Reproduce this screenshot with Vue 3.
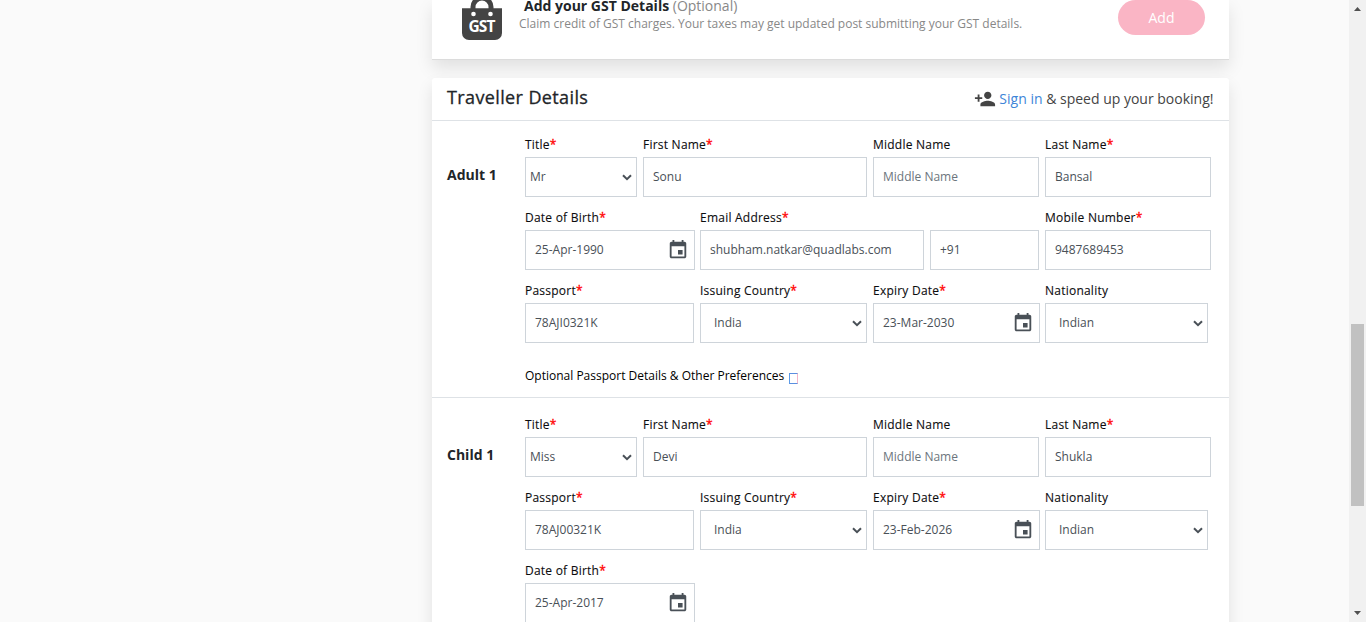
<script setup>
const travellers = [
  {
    name: 'Adult 1',
    optional: true,
    fields: [
      { label: 'Title', required: true, value: 'Mr', type: 'select', size: 'title' },
      { label: 'First Name', required: true, value: 'Sonu', type: 'text', size: 'first' },
      { label: 'Middle Name', value: 'Middle Name', type: 'text', size: 'middle', empty: true },
      { label: 'Last Name', required: true, value: 'Bansal', type: 'text', size: 'last' },
      { label: 'Date of Birth', required: true, value: '25-Apr-1990', type: 'date', size: 'birth' },
      { label: 'Email Address', required: true, value: 'shubham.natkar@quadlabs.com', type: 'text', size: 'email' },
      { label: '', value: '+91', type: 'text', size: 'code' },
      { label: 'Mobile Number', required: true, value: '9487689453', type: 'text', size: 'last' },
      { label: 'Passport', required: true, value: '78AJI0321K', type: 'text', size: 'passport' },
      { label: 'Issuing Country', required: true, value: 'India', type: 'select', size: 'country' },
      { label: 'Expiry Date', required: true, value: '23-Mar-2030', type: 'date', size: 'expiry' },
      { label: 'Nationality', value: 'Indian', type: 'select', size: 'nation' },
    ],
  },
  {
    name: 'Child 1',
    optional: false,
    fields: [
      { label: 'Title', required: true, value: 'Miss', type: 'select', size: 'title' },
      { label: 'First Name', required: true, value: 'Devi', type: 'text', size: 'first' },
      { label: 'Middle Name', value: 'Middle Name', type: 'text', size: 'middle', empty: true },
      { label: 'Last Name', required: true, value: 'Shukla', type: 'text', size: 'last' },
      { label: 'Passport', required: true, value: '78AJ00321K', type: 'text', size: 'passport' },
      { label: 'Issuing Country', required: true, value: 'India', type: 'select', size: 'country' },
      { label: 'Expiry Date', required: true, value: '23-Feb-2026', type: 'date', size: 'expiry' },
      { label: 'Nationality', value: 'Indian', type: 'select', size: 'nation' },
      { label: 'Date of Birth', required: true, value: '25-Apr-2017', type: 'date', size: 'birth' },
    ],
  },
]
</script>

<template>
  <div class="page">
    <main class="content">
      <section class="card gst">
        <svg class="gst-icon" width="40" height="48" viewBox="0 0 40 48">
          <path d="M11 20V15a9 9 0 0 1 18 0v5" fill="none" stroke="#444" stroke-width="5" />
          <path d="M0 16.300H40V41a7 7 0 0 1-7 7H7a7 7 0 0 1-7-7Z" fill="#444" />
          <circle cx="11.500" cy="22" r="2.300" fill="#fff" />
          <circle cx="28.500" cy="22" r="2.300" fill="#fff" />
          <text x="6.500" y="39.700" textLength="27" class="gst-text">GST</text>
        </svg>
        <div class="gst-info">
          <div class="gst-title"><b>Add your GST Details</b> <span>(Optional)</span></div>
          <div class="gst-sub">Claim credit of GST charges. Your taxes may get updated post submitting your GST details.</div>
        </div>
        <button class="add">Add</button>
      </section>

      <section class="card travellers">
        <header class="head">
          <h2>Traveller Details</h2>
          <div class="signin">
            <svg width="22" height="22" viewBox="0 0 24 24" fill="#444">
              <path d="M15 12c2.21 0 4-1.79 4-4s-1.79-4-4-4-4 1.79-4 4 1.79 4 4 4zm-9-2V7H4v3H1v2h3v3h2v-3h3v-2H6zm9 4c-2.67 0-8 1.34-8 4v2h16v-2c0-2.660-5.330-4-8-4z" />
            </svg>
            <span class="signin-text"><a>Sign in</a> &amp; speed up your booking!</span>
          </div>
        </header>

        <div v-for="t in travellers" :key="t.name" class="traveller">
          <div class="who">{{ t.name }}</div>
          <div class="form">
            <div class="grid">
              <div v-for="(f, i) in t.fields" :key="i" class="field" :class="f.size">
                <label>{{ f.label }}<i v-if="f.required">*</i></label>
                <div class="control" :class="[f.type, { empty: f.empty }]">
                  <span class="value">{{ f.value }}</span>
                  <svg v-if="f.type === 'select'" class="chev" width="10" height="7" viewBox="0 0 10 7">
                    <path d="M1 1.200L5 5.200L9 1.200" fill="none" stroke="#495057" stroke-width="2" />
                  </svg>
                  <svg v-if="f.type === 'date'" class="cal" width="22" height="22" viewBox="0 0 24 24" fill="#495057">
                    <path d="M17 12h-5v5h5v-5zM16 1v2H8V1H6v2H5c-1.110 0-1.990.9-1.990 2L3 19c0 1.100.89 2 2 2h14c1.100 0 2-.9 2-2V5c0-1.100-.9-2-2-2h-1V1h-2zm3 18H5V8h14v11z" />
                  </svg>
                </div>
              </div>
            </div>
            <div v-if="t.optional" class="optional">
              <span>Optional Passport Details &amp; Other Preferences</span><i class="toggle"></i>
            </div>
          </div>
        </div>
      </section>
    </main>
    <aside class="scroll">
      <svg width="17" height="17" viewBox="0 0 17 17"><path d="M5 11L8.500 7L12 11Z" fill="#505050" /></svg>
      <div class="track"><div class="thumb"></div></div>
      <svg width="17" height="17" viewBox="0 0 17 17"><path d="M5 6L8.500 10L12 6Z" fill="#505050" /></svg>
    </aside>
  </div>
</template>

<style>
body {
  margin: 0;
  overflow: hidden;
}
</style>

<style scoped>
* {
  box-sizing: border-box;
}
.page {
  display: flex;
  justify-content: flex-end;
  height: 622px;
  overflow: hidden;
  background: #fafafa;
  font-family: "Open Sans", sans-serif;
  color: #212529;
}
.content {
  width: 797px;
  margin-right: 120px;
}
.card {
  background: #fff;
  box-shadow: 0 8px 16px rgba(0, 0, 0, 0.1);
}
.gst {
  display: flex;
  height: 60px;
  padding-left: 30px;
  border-bottom: 1px solid #dcdcdc;
}
.gst-icon {
  margin-top: -8px;
}
.gst-text {
  font: 700 15.5px "Noto Sans", sans-serif;
  fill: #fff;
}
.gst-info {
  width: 599px;
  padding-left: 17px;
  white-space: nowrap;
}
.gst-title {
  height: 16px;
  padding-left: 5px;
  font-size: 14px;
  line-height: 12px;
}
.gst-title b {
  font-weight: 700;
}
.gst-title span {
  color: #888;
}
.gst-sub {
  font-size: 12px;
  line-height: 16px;
  color: #888;
}
.add {
  width: 87px;
  height: 35px;
  padding: 0;
  margin-left: 17px;
  border: 0;
  border-radius: 18px;
  background: #fab5c5;
  color: #fff;
  font: 14px "Open Sans", sans-serif;
}
.travellers {
  margin-top: 18px;
  height: 600px;
  border-radius: 3px 3px 0 0;
}
.head {
  display: flex;
  justify-content: space-between;
  height: 43px;
  padding: 0 15.5px 0 15px;
  border-bottom: 1px solid #dee2e6;
}
h2 {
  margin: 0;
  font-size: 18px;
  font-weight: 400;
  letter-spacing: 0.38px;
  line-height: 39px;
  -webkit-text-stroke: 0.3px #212529;
}
.signin {
  display: flex;
  gap: 3px;
  font-size: 14px;
  line-height: 41px;
  color: #444;
}
.signin svg {
  margin-top: 10px;
}
.signin a {
  color: #3d85d8;
}
.traveller {
  display: flex;
  padding: 13px 18px 0 15px;
}
.traveller + .traveller {
  border-top: 1px solid #dee2e6;
  padding-top: 16px;
}
.who {
  width: 78px;
  padding-top: 31px;
  font-size: 14px;
  font-weight: 700;
  line-height: 20px;
}
.grid {
  display: grid;
  grid-template-columns: 118px 57px 173px 57px 115px 166px;
  row-gap: 10px;
}
label {
  display: block;
  height: 23px;
  padding-top: 1px;
  font-size: 12px;
  letter-spacing: 0.23px;
  line-height: 20px;
  white-space: nowrap;
  color: #0c0c0e;
  -webkit-text-stroke: 0.1px;
}
label i {
  color: #f00;
  font-style: normal;
  -webkit-text-stroke: 0.3px #f00;
}
.control {
  display: flex;
  align-items: center;
  justify-content: space-between;
  height: 40px;
  padding: 0 5px 0 9px;
  border: 1px solid #ced4da;
  font-size: 12px;
  color: #495057;
}
.value {
  padding-bottom: 2px;
}
.empty {
  color: #6c757d;
}
.control.select {
  padding: 0 4px 0 13px;
}
.title .control.select {
  padding-left: 4px;
}
.title { width: 112px; }
.first,
.email { grid-column: span 2; width: 224px; }
.middle { grid-column: span 2; width: 166px; }
.last { width: 166px; }
.birth { grid-column: span 2; width: 170px; }
.code { width: 109px; }
.passport { grid-column: span 2; width: 169px; }
.country { width: 167px; }
.expiry { grid-column: span 2; width: 167px; }
.nation { width: 163px; }
.optional {
  display: flex;
  align-items: center;
  height: 54px;
  padding-top: 12px;
  font-size: 12px;
  color: #000;
}
.optional span {
  padding-bottom: 2px;
}
.toggle {
  width: 9px;
  height: 11px;
  margin: 4px 0 0 5px;
  border: 1px solid;
  border-color: #5b8fe0 #f5b5c8 #5b8fe0 #5b9be8;
}
.scroll {
  width: 17px;
  background: #f1f1f1;
}
.scroll svg {
  display: block;
}
.track {
  height: 588px;
  padding: 307px 2px 0;
}
.thumb {
  height: 182px;
  background: #c1c1c1;
}
</style>
